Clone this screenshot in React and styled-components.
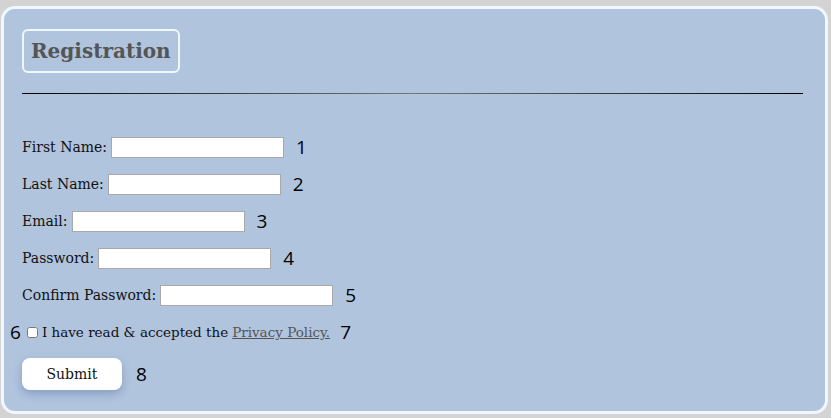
import React from 'react'
import styled, { createGlobalStyle } from 'styled-components'

const GlobalStyle = createGlobalStyle`
  html, body {
    margin: 0;
    padding: 0;
    background: #d3d3d3;
  }
  body {
    font-family: 'DejaVu Serif', 'Liberation Serif', serif;
  }
`

const Card = styled.form`
  box-sizing: border-box;
  margin: 6px 3px 4px 1px;
  height: 408px;
  padding: 20px 22px 0 18px;
  background: #b0c4de;
  border: 3px solid #f0f8ff;
  border-radius: 14px;
`

const TitleBox = styled.div`
  display: inline-flex;
  align-items: center;
  box-sizing: border-box;
  height: 44px;
  padding: 0 7px;
  border: 2px solid #f0f8ff;
  border-radius: 6px;
  h2 {
    margin: 0;
    font-size: 20px;
    font-weight: bold;
    color: #555;
  }
`

const Rule = styled.hr`
  margin: 20px 0 0;
  height: 1px;
  border: none;
  background: linear-gradient(to right, #000, #777, #000);
`

const Fields = styled.div`
  display: flex;
  flex-direction: column;
  gap: 15px;
  padding-top: 42px;
`

const Row = styled.div`
  display: flex;
  align-items: center;
  height: ${p => p.$h || 22}px;
  font-size: ${p => p.$size || 14}px;
  color: #111;
  margin-left: ${p => p.$shift || 0}px;
`

const Label = styled.label`
  margin-right: 4px;
`

const Input = styled.input`
  box-sizing: border-box;
  width: 173px;
  height: 21px;
  margin: 0;
  border: 1px solid #a9a9a9;
  background: #fff;
`

const Num = styled.span`
  font-family: 'Open Sans', 'Noto Sans', sans-serif;
  font-size: 19px;
  color: #000;
  margin-left: ${p => p.$gap ?? 12}px;
`

const Check = styled.input`
  width: 11px;
  height: 11px;
  margin: 0 4px 0 6px;
`

const Link = styled.a`
  color: #555;
  margin-left: 4px;
`

const Submit = styled.button`
  width: 100px;
  height: 32px;
  border: none;
  border-radius: 8px;
  background: #fff;
  font-family: inherit;
  font-size: 14px;
  color: #111;
  box-shadow: 0 4px 8px rgba(60, 90, 140, 0.35);
`

const fields = [
  ['First Name:', 'text'],
  ['Last Name:', 'text'],
  ['Email:', 'email'],
  ['Password:', 'password'],
  ['Confirm Password:', 'password'],
]

export default function App() {
  return (
    <>
      <GlobalStyle />
      <Card onSubmit={e => e.preventDefault()}>
        <TitleBox>
          <h2>Registration</h2>
        </TitleBox>
        <Rule />
        <Fields>
          {fields.map(([label, type], i) => (
            <Row key={label}>
              <Label>{label}</Label>
              <Input type={type} />
              <Num>{i + 1}</Num>
            </Row>
          ))}
          <Row $shift={-12} $size={13.5}>
            <Num $gap={0}>6</Num>
            <Check type="checkbox" />
            I have read &amp; accepted the
            <Link href="#">Privacy Policy.</Link>
            <Num $gap={10}>7</Num>
          </Row>
          <Row $h={32}>
            <Submit type="submit">Submit</Submit>
            <Num $gap={14}>8</Num>
          </Row>
        </Fields>
      </Card>
    </>
  )
}
